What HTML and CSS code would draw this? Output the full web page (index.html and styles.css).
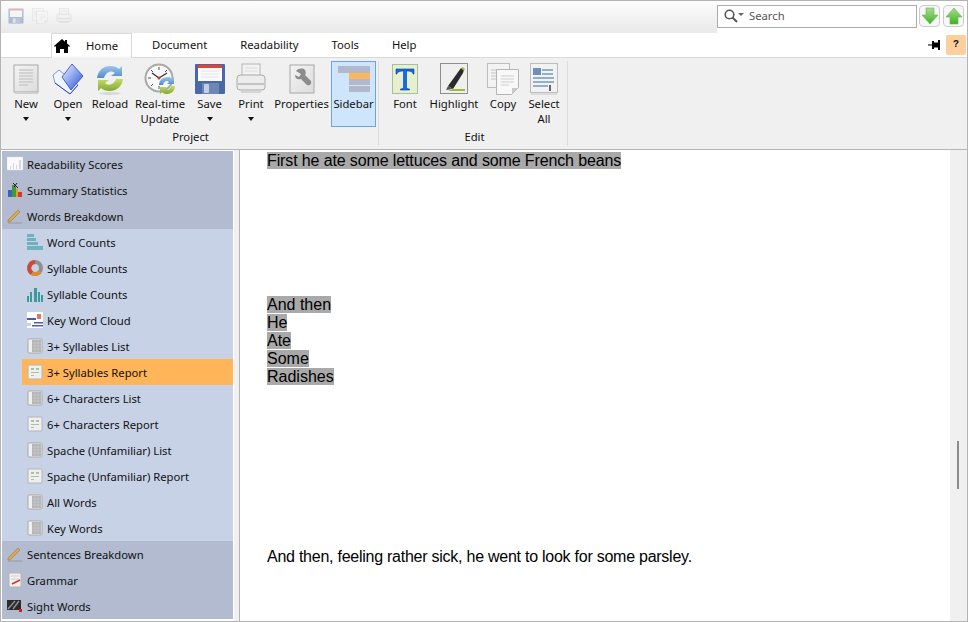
FILE: index.html
```html
<!DOCTYPE html>
<html lang="en">
  <head>
    <meta charset="UTF-8" />
    <meta name="viewport" content="width=device-width, initial-scale=1.0" />
    <title>Readability Studio</title>
    <link rel="stylesheet" href="styles.css">
  </head>
  <body>
    <!-- Shared icons -->
    <svg class="defs" width="0" height="0">
      <defs>
        <linearGradient id="sheet" x1="0" y1="0" x2="1" y2="1"><stop offset="0" stop-color="#f4f4f4"/><stop offset="1" stop-color="#dcdcdc"/></linearGradient>
        <linearGradient id="blue" x1="0" y1="0" x2="1" y2="1"><stop offset="0" stop-color="#f2f6fe"/><stop offset=".55" stop-color="#7d9cec"/><stop offset="1" stop-color="#2a4fd0"/></linearGradient>
        <linearGradient id="refreshTop" x1="0" y1="0" x2="0" y2="1"><stop offset="0" stop-color="#9cc4ec"/><stop offset="1" stop-color="#4f8ec9"/></linearGradient>
        <linearGradient id="refreshBottom" x1="0" y1="0" x2="0" y2="1"><stop offset="0" stop-color="#c5dc6a"/><stop offset="1" stop-color="#82a92f"/></linearGradient>
        <linearGradient id="greenArrow" x1="0" y1="0" x2="0" y2="1"><stop offset="0" stop-color="#a9dc90"/><stop offset="1" stop-color="#3eb324"/></linearGradient>

        <symbol id="i-new" viewBox="0 0 32 32">
          <rect x="4" y="2" width="24" height="27" fill="url(#sheet)" stroke="#a8a8a8"/>
          <path d="M9 7h14M9 10h14M9 13h14M9 16h14M9 19h14M9 22h9" stroke="#d2d2d2" stroke-width="2"/>
          <rect x="5" y="29" width="23" height="2" fill="#cfcfcf"/>
        </symbol>
        <symbol id="i-open" viewBox="0 0 32 32">
          <path d="M1 12 7 7 26 22 18 31 3 20z" fill="#f0f5fe" stroke="#7f96ee"/>
          <path d="M10 14 20 1 31 13 19 27z" fill="url(#blue)" stroke="#2b3fd8" stroke-width=".8"/>
          <path d="M3 20 18 31 26 22" fill="none" stroke="#3344dd"/>
        </symbol>
        <symbol id="i-reload" viewBox="0 0 32 32">
          <path d="M3 15C4 7 10 3 16 3c4 0 7 1 9 3l3-3v10H17l4-3c-3-3-9-2-11 5z" fill="url(#refreshTop)"/>
          <path d="M29 16c-1 8-7 12-13 12-4 0-7-1-9-3l-3 3V17h11l-4 3c3 3 9 2 11-4z" fill="url(#refreshBottom)"/>
          <ellipse cx="16" cy="30.500" rx="11" ry="1.500" fill="#d8d8d8"/>
        </symbol>
        <symbol id="i-clock" viewBox="0 0 32 32">
          <circle cx="15" cy="15" r="13.500" fill="#f8f8f8" stroke="#a9a9a9" stroke-width="2"/>
          <path d="M15 4v3M15 23v3M4 15h3M23 15h3M7 7l2 2M23 7l-2 2M7 23l2-2" stroke="#555"/>
          <path d="M15 15 8 10M15 15l8-5" stroke="#333" stroke-width="1.300"/>
          <circle cx="15" cy="15" r="1.500" fill="#c33"/>
          <path d="M15 22c0-5 4-8 8-8 2 0 4 .5 5 2l2-2v7h-7l2-2c-2-2-5-1-6 3z" fill="url(#refreshTop)"/>
          <path d="M31 23c0 5-4 8-8 8-2 0-4-.5-5-2l-2 2v-7h7l-2 2c2 2 5 1 6-3z" fill="url(#refreshBottom)"/>
        </symbol>
        <symbol id="i-save" viewBox="0 0 32 32">
          <rect x="1" y="1" width="30" height="30" rx="1" fill="#4a69a4"/>
          <rect x="4" y="2" width="24" height="16" fill="#fafafa"/>
          <rect x="4" y="2" width="24" height="3" fill="#e4432e"/>
          <path d="M7 8h18M7 11h18M7 14h18" stroke="#e4e4e4"/>
          <rect x="8" y="20" width="17" height="11" fill="#6d87b8"/>
          <rect x="10" y="21" width="5" height="9" rx="1" fill="#c4d0e2"/>
        </symbol>
        <symbol id="i-print" viewBox="0 0 32 32">
          <rect x="7" y="1" width="18" height="14" fill="#f2f2f2" stroke="#b5b5b5"/>
          <path d="M10 5h12M10 8h12" stroke="#dcdcdc"/>
          <path d="M2 15q0-3 4-3h20q4 0 4 3v9q0 3-3 3H5q-3 0-3-3z" fill="#ececec" stroke="#a9a9a9"/>
          <rect x="3" y="20" width="26" height="2" fill="#c4c4c4"/>
          <rect x="6" y="28" width="20" height="2" fill="#d5d5d5"/>
        </symbol>
        <symbol id="i-props" viewBox="0 0 32 32">
          <rect x="4" y="2" width="24" height="28" fill="url(#sheet)" stroke="#a8a8a8"/>
          <path d="M10 8c3-3 7-3 9-1 1 2 1 4 0 5l6 6c1 3-1 5-4 4l-6-6c-3 1-6 0-6-4l4 2 2-3z" fill="#8c8c8c"/>
        </symbol>
        <symbol id="i-sidebar" viewBox="0 0 32 26">
          <rect x="0" y="0" width="32" height="7" fill="#b2b8cc"/>
          <rect x="11" y="7" width="21" height="6" fill="#ffb558"/>
          <rect x="11" y="13" width="21" height="6" fill="#b2b8cc"/>
          <rect x="11" y="20" width="21" height="6" fill="#b2b8cc"/>
        </symbol>
        <symbol id="i-font" viewBox="0 0 26 30">
          <rect x=".5" y=".5" width="25" height="29" fill="#e6f0cf" stroke="#a7c09a"/>
          <path d="M4 5h18v5h-1c0-2-2-3-6.500-3v16c0 1 1 2 3 2v1h-9v-1c2 0 3-1 3-2V7C8 7 5 8 5 10H4z" fill="#0b6df0" stroke="#063a9c" stroke-width=".6"/>
        </symbol>
        <symbol id="i-highlight" viewBox="0 0 28 32">
          <rect x=".5" y=".5" width="27" height="30" fill="#efefef" stroke="#8e8e8e"/>
          <path d="M8 23 21 5l3 2-1 3L13 26z" fill="#2b2b2b"/>
          <path d="M21 5l2-1 2 2-1 2z" fill="#a8c23c"/>
          <path d="M6 27l2-4 5 3z" fill="#555"/>
          <path d="M13 26h12v2H8z" fill="#9dbb32"/>
        </symbol>
        <symbol id="i-copy" viewBox="0 0 32 32">
          <rect x=".5" y=".5" width="22" height="24" fill="#f3f3f3" stroke="#bdbdbd"/>
          <path d="M4 7h8M4 10h8M4 13h8M4 16h8" stroke="#d5d5d5" stroke-width="1.500"/>
          <path d="M9.500 6.500h22v18l-7 7h-15z" fill="#f8f8f8" stroke="#b5b5b5"/>
          <path d="M14 13h13M14 16h13M14 19h13M14 22h8" stroke="#cfcfcf"/>
          <path d="M31 25h-6v6z" fill="#c9c9c9"/>
        </symbol>
        <symbol id="i-select" viewBox="0 0 28 32">
          <rect x=".5" y=".5" width="27" height="29" fill="#f2f2f2" stroke="#bdbdbd"/>
          <rect x="3" y="5" width="8" height="7" fill="#6f8fb9"/>
          <path d="M12 6h11v2H12zM12 10h11v2H12zM3 14h21v2H3zM3 18h21v2H3zM3 22h15v2H3z" fill="#93afd0"/>
          <rect x="19" y="22" width="2" height="6" fill="#666"/>
          <rect x="1" y="30" width="26" height="2" fill="#dcdcdc"/>
        </symbol>
        <symbol id="i-scores" viewBox="0 0 16 16">
          <rect y="1" width="16" height="13" fill="#fafafa" stroke="#d8dde8" stroke-width=".5"/>
          <path d="M3 10h1v3H3zM6 7h1v6H6zM9 9h1v4H9zM12 4h2v9h-2z" fill="#d4d7dd"/>
        </symbol>
        <symbol id="i-stats" viewBox="0 0 16 16">
          <rect x="1" y="8" width="4" height="7" fill="#3c64b4"/>
          <rect x="5" y="3" width="4" height="12" fill="#3e9a3a"/>
          <rect x="9" y="7" width="2" height="8" fill="#e8a020"/>
          <rect x="11" y="10" width="4" height="5" fill="#d23b25"/>
          <path d="M6 1l5 5M10 1 7 5" stroke="#222"/>
        </symbol>
        <symbol id="i-pencil" viewBox="0 0 16 16">
          <path d="M1 12 11 2l2 2L3 14H1z" fill="#dba94c" stroke="#a07a3a" stroke-width=".6"/>
          <path d="M1 15h14" stroke="#9a9a9a"/>
        </symbol>
        <symbol id="i-counts" viewBox="0 0 16 16">
          <path d="M0 0h7v3H0zM0 4h9v3H0zM0 8h11v3H0zM0 12h16v4H0z" fill="#6fb2bd"/>
        </symbol>
        <symbol id="i-donut" viewBox="0 0 16 16">
          <circle cx="8" cy="8" r="6" fill="none" stroke="#8f8f8f" stroke-width="4"/>
          <path d="M8 2a6 6 0 0 0-3 11" fill="none" stroke="#cc4a3a" stroke-width="4"/>
          <path d="M5 13a6 6 0 0 0 8-1" fill="none" stroke="#e08a30" stroke-width="4"/>
        </symbol>
        <symbol id="i-bars" viewBox="0 0 16 16">
          <path d="M0 10h2v6H0zM3 6h2v10H3zM7 2h3v14H7zM11 6h2v10h-2zM14 9h2v7h-2z" fill="#3b9a9a"/>
        </symbol>
        <symbol id="i-cloud" viewBox="0 0 16 16">
          <rect width="16" height="16" fill="#fff"/>
          <path d="M0 6h9v2H0z" fill="#555a9a"/><path d="M10 2h4v5h-4z" fill="#d9796a"/>
          <path d="M7 10h9v1.500H7zM5 13h11v1.500H5z" fill="#4a5fb0"/><path d="M0 11h4v3H0z" fill="#c8d4e4"/>
        </symbol>
        <symbol id="i-list" viewBox="0 0 16 16">
          <rect x="1" y="1" width="14" height="14" rx="1" fill="#f0f0f0" stroke="#a9a9a9"/>
          <rect x="5" y="2" width="9" height="12" fill="#b4b4b4"/>
          <path d="M5 5h9M5 8h9M5 11h9M8 2v12M11 2v12" stroke="#d0d0d0" stroke-width=".5"/>
        </symbol>
        <symbol id="i-report" viewBox="0 0 16 16">
          <rect x="1" y="1" width="14" height="14" rx="1" fill="#efefef" stroke="#b5b5b5"/>
          <path d="M4 4h3v2H4zM9 4h3v2H9zM4 8h8v1H4zM4 11h3v1H4z" fill="#a9c2a4"/>
        </symbol>
        <symbol id="i-grammar" viewBox="0 0 16 16">
          <rect x="2" y="1" width="12" height="14" fill="#f4f0ee" stroke="#b5b5b5"/>
          <path d="M4 4h8M4 7h8" stroke="#d0d0d0"/>
          <path d="M5 12l8-4" stroke="#d8322a" stroke-width="1.500"/>
        </symbol>
        <symbol id="i-sight" viewBox="0 0 16 16">
          <rect y="2" width="14" height="10" fill="#2a2a2a"/>
          <path d="M1 11 8 3M6 11l6-8" stroke="#8e8e8e" stroke-width="1.500"/>
          <rect x="12" y="11" width="3" height="3" fill="#e01818"/>
        </symbol>
      </defs>
    </svg>

    <div class="window">
      <!-- Quick access + search -->
      <header class="titlebar">
        <div class="quick">
          <svg class="quick-icon" width="16" height="16"><use href="#i-save"/></svg>
          <svg class="quick-icon" width="16" height="16"><use href="#i-copy"/></svg>
          <svg class="quick-icon" width="16" height="16"><use href="#i-print"/></svg>
        </div>
        <div class="search-area">
          <div class="search">
            <svg width="20" height="14" viewBox="0 0 20 14">
              <circle cx="5.500" cy="5.500" r="4.300" fill="none" stroke="#555" stroke-width="1.600"/>
              <path d="M8.500 8.500 13 13" stroke="#555" stroke-width="2"/>
              <path d="M14 4h6l-3 3z" fill="#666"/>
            </svg>
            <span>Search</span>
          </div>
          <button class="nav-btn" aria-label="Next">
            <svg width="16" height="18" viewBox="0 0 16 18"><path d="M4 1h8v7h4l-8 9-8-9h4z" fill="url(#greenArrow)" stroke="#6cb34e" stroke-width=".6"/></svg>
          </button>
          <button class="nav-btn" aria-label="Previous">
            <svg width="16" height="18" viewBox="0 0 16 18"><path d="M4 17h8v-7h4L8 1 0 10h4z" fill="url(#greenArrow)" stroke="#6cb34e" stroke-width=".6"/></svg>
          </button>
        </div>
      </header>

      <!-- Ribbon tabs -->
      <nav class="tabs">
        <div class="tab tab-home">
          <svg width="16" height="16" viewBox="0 0 16 16"><path d="M8 1 0 8l1 1 1-1v7h4v-4h4v4h4V8l1 1 1-1-3-2.600V2h-2v1.700z" fill="#000"/></svg>
          <span>Home</span>
        </div>
        <div class="tab">Document</div>
        <div class="tab">Readability</div>
        <div class="tab">Tools</div>
        <div class="tab">Help</div>
        <div class="tabs-right">
          <svg width="13" height="12" viewBox="0 0 13 12"><path d="M0 5.500h4v1H0zM4 2h2v1.500h4V1h2v10h-2V8.500H6V10H4z" fill="#000"/></svg>
          <div class="help-btn">?</div>
        </div>
      </nav>

      <!-- Ribbon -->
      <section class="ribbon">
        <div class="group group-project">
          <div class="group-buttons">
            <div class="rb w-new"><svg class="rb-icon" width="32" height="32"><use href="#i-new"/></svg><span>New</span><i class="caret"></i></div>
            <div class="rb w-new"><svg class="rb-icon" width="32" height="32"><use href="#i-open"/></svg><span>Open</span><i class="caret"></i></div>
            <div class="rb w-reload"><svg class="rb-icon" width="32" height="32"><use href="#i-reload"/></svg><span>Reload</span></div>
            <div class="rb w-realtime"><svg class="rb-icon" width="32" height="32"><use href="#i-clock"/></svg><span>Real-time<br>Update</span></div>
            <div class="rb w-save"><svg class="rb-icon" width="32" height="32"><use href="#i-save"/></svg><span>Save</span><i class="caret"></i></div>
            <div class="rb w-new"><svg class="rb-icon" width="32" height="32"><use href="#i-print"/></svg><span>Print</span><i class="caret"></i></div>
            <div class="rb w-props"><svg class="rb-icon" width="32" height="32"><use href="#i-props"/></svg><span>Properties</span></div>
            <div class="rb w-sidebar rb-active"><svg class="rb-icon sidebar-icon" width="32" height="26"><use href="#i-sidebar"/></svg><span>Sidebar</span></div>
          </div>
          <div class="group-label">Project</div>
        </div>
        <div class="group group-edit">
          <div class="group-buttons">
            <div class="rb w-font"><svg class="rb-icon" width="26" height="32" viewBox="0 -1 26 32"><use href="#i-font" width="26" height="30"/></svg><span>Font</span></div>
            <div class="rb w-highlight"><svg class="rb-icon" width="28" height="32"><use href="#i-highlight"/></svg><span>Highlight</span></div>
            <div class="rb w-font"><svg class="rb-icon" width="32" height="32"><use href="#i-copy"/></svg><span>Copy</span></div>
            <div class="rb w-select"><svg class="rb-icon" width="28" height="32"><use href="#i-select"/></svg><span>Select<br>All</span></div>
          </div>
          <div class="group-label">Edit</div>
        </div>
      </section>

      <main class="main">
        <aside class="sidebar">
          <div class="row row-head"><svg width="16" height="16"><use href="#i-scores"/></svg>Readability Scores</div>
          <div class="row row-head"><svg width="16" height="16"><use href="#i-stats"/></svg>Summary Statistics</div>
          <div class="row row-head"><svg width="16" height="16"><use href="#i-pencil"/></svg>Words Breakdown</div>
          <div class="sub">
            <div class="row"><svg width="16" height="16"><use href="#i-counts"/></svg>Word Counts</div>
            <div class="row"><svg width="16" height="16"><use href="#i-donut"/></svg>Syllable Counts</div>
            <div class="row"><svg width="16" height="16"><use href="#i-bars"/></svg>Syllable Counts</div>
            <div class="row"><svg width="16" height="16"><use href="#i-cloud"/></svg>Key Word Cloud</div>
            <div class="row"><svg width="16" height="16"><use href="#i-list"/></svg>3+ Syllables List</div>
            <div class="row row-selected"><svg width="16" height="16"><use href="#i-report"/></svg>3+ Syllables Report</div>
            <div class="row"><svg width="16" height="16"><use href="#i-list"/></svg>6+ Characters List</div>
            <div class="row"><svg width="16" height="16"><use href="#i-report"/></svg>6+ Characters Report</div>
            <div class="row"><svg width="16" height="16"><use href="#i-list"/></svg>Spache (Unfamiliar) List</div>
            <div class="row"><svg width="16" height="16"><use href="#i-report"/></svg>Spache (Unfamiliar) Report</div>
            <div class="row"><svg width="16" height="16"><use href="#i-list"/></svg>All Words</div>
            <div class="row"><svg width="16" height="16"><use href="#i-list"/></svg>Key Words</div>
          </div>
          <div class="row row-head"><svg width="16" height="16"><use href="#i-pencil"/></svg>Sentences Breakdown</div>
          <div class="row row-head"><svg width="16" height="16"><use href="#i-grammar"/></svg>Grammar</div>
          <div class="row row-head"><svg width="16" height="16"><use href="#i-sight"/></svg>Sight Words</div>
        </aside>

        <article class="content">
          <p class="para-first"><mark>First he ate some lettuces and some French beans</mark></p>
          <p class="para-list"><mark>And then</mark><br><mark>He</mark><br><mark>Ate</mark><br><mark>Some</mark><br><mark>Radishes</mark></p>
          <p class="para-last">And then, feeling rather sick, he went to look for some parsley.</p>
        </article>

        <div class="scrollbar"><div class="thumb"></div></div>
      </main>
    </div>
  </body>
</html>
```

FILE: styles.css
```css
* {
  box-sizing: border-box;
}
body {
  margin: 0;
  font-family: "Noto Sans", "Open Sans", sans-serif;
  font-size: 11.25px;
  color: #111;
  background-color: #fff;
}
.defs {
  position: absolute;
}
.window {
  width: 968px;
  height: 622px;
  border: 1px solid #b4b4b4;
  overflow: hidden;
  display: flex;
  flex-direction: column;
}

/* Title bar */
.titlebar {
  height: 32px;
  display: flex;
  flex: none;
}
.quick {
  width: 716px;
  height: 32px;
  padding: 7px 0 0 7px;
  display: flex;
  gap: 8px;
  background: linear-gradient(#fdfdfd, #e9e9e9);
}
.quick-icon {
  opacity: 0.4;
}
.search-area {
  flex: 1;
  display: flex;
  gap: 2px;
  padding-top: 4px;
}
.search {
  width: 200px;
  height: 23px;
  border: 1px solid #ababab;
  display: flex;
  align-items: center;
  gap: 5px;
  padding: 0 0 2px 6px;
  color: #555;
}
.nav-btn {
  width: 21px;
  height: 22px;
  padding: 0;
  margin: 0 1px 0 0;
  border: 1px solid #ccc;
  border-radius: 4px;
  background-color: #f7f7f7;
  display: flex;
  align-items: center;
  justify-content: center;
}

/* Tabs */
.tabs {
  height: 24px;
  flex: none;
  display: flex;
  align-items: stretch;
  padding-left: 50px;
  position: relative;
}
.tab {
  padding: 4px 16.5px 0;
}
.tab-home {
  width: 81px;
  height: 25px;
  padding: 0 0 2px 2px;
  margin-right: 3.5px;
  display: flex;
  gap: 16px;
  align-items: center;
  background-color: #f0f0f0;
  background: linear-gradient(#fff, #fff 90%, #f0f0f0);
  border: 1px solid #d9d9d9;
  border-bottom: 0;
  position: relative;
  z-index: 1;
}
.tab-home svg {
  margin-top: 2px;
}
.tabs-right {
  margin-left: auto;
  display: flex;
  align-items: flex-start;
  gap: 5px;
  padding: 2px 1px 0 0;
}
.tabs-right svg {
  margin-top: 4px;
}
.help-btn {
  width: 20px;
  height: 20px;
  background-color: #fdcf9d;
  border-radius: 2px;
  font: bold 10px "Liberation Mono", monospace;
  text-align: center;
  line-height: 20px;
}

/* Ribbon */
.ribbon {
  height: 93px;
  flex: none;
  display: flex;
  padding: 3px 0 0 4px;
  background-color: #f0f0f0;
  border-top: 1px solid #d9d9d9;
  border-bottom: 1px solid #b4b4b4;
}
.group {
  height: 85px;
  display: flex;
  flex-direction: column;
  border-right: 1px solid #dcdcdc;
}
.group-project {
  width: 374px;
}
.group-edit {
  width: 189px;
  padding-left: 3px;
}
.group-buttons {
  display: flex;
  height: 66px;
}
.group-label {
  text-align: center;
  line-height: 16px;
  margin-top: 2px;
}
.group-project .group-label {
  padding-right: 2px;
}
.rb {
  height: 66px;
  display: flex;
  flex-direction: column;
  align-items: center;
  padding-top: 2px;
  text-align: center;
  line-height: 15px;
  flex: none;
}
.rb-icon {
  flex: none;
  margin-bottom: 1px;
}
.sidebar-icon {
  margin: 3px 0 4px;
}
.rb-active {
  background-color: #cfe5fc;
  border: 1px solid #6aa5df;
  padding-top: 1px;
}
.caret {
  width: 0;
  height: 0;
  margin-top: 6px;
  border-left: 3.5px solid transparent;
  border-right: 3.5px solid transparent;
  border-top: 4px solid #111;
}
.w-new { width: 42px; }
.w-reload { width: 42px; }
.w-realtime { width: 58px; }
.w-save { width: 41px; }
.w-props { width: 59px; }
.w-sidebar { width: 45px; }
.w-font { width: 46px; }
.w-highlight { width: 52px; }
.w-select { width: 36px; }

/* Main area */
.main {
  flex: 1;
  min-height: 0;
  display: flex;
  background-color: #f0f0f0;
}
.sidebar {
  width: 233px;
  flex: none;
  padding: 1px;
  background-color: #fff;
  margin-right: 5px;
}
.row {
  height: 26px;
  display: flex;
  align-items: center;
  gap: 4px;
  padding-left: 5px;
  white-space: nowrap;
}
.row svg {
  flex: none;
}
.row-head {
  background-color: #b2bbcf;
}
.sub {
  padding-left: 20px;
  background-color: #c7d2e6;
}
.row-selected {
  background-color: #ffb558;
}
.content {
  flex: 1;
  padding: 2px 0 0 27px;
  background-color: #fff;
  border-left: 1px solid #b4b4b4;
  font-family: "Liberation Sans", Arial, sans-serif;
  font-size: 16px;
  line-height: 18px;
  color: #000;
}
.content p {
  margin: 0;
}
.para-first {
  letter-spacing: -0.125px;
}
.para-list {
  padding-top: 126px;
}
.para-last {
  padding-top: 162px;
  letter-spacing: -0.25px;
}
mark {
  background-color: #a9a9a9;
  color: #000;
}
.scrollbar {
  width: 17px;
  flex: none;
  padding: 291px 0 0 7px;
  background-color: #f0f0f0;
}
.thumb {
  width: 2px;
  height: 48px;
  background-color: #8c8c8c;
}
```
